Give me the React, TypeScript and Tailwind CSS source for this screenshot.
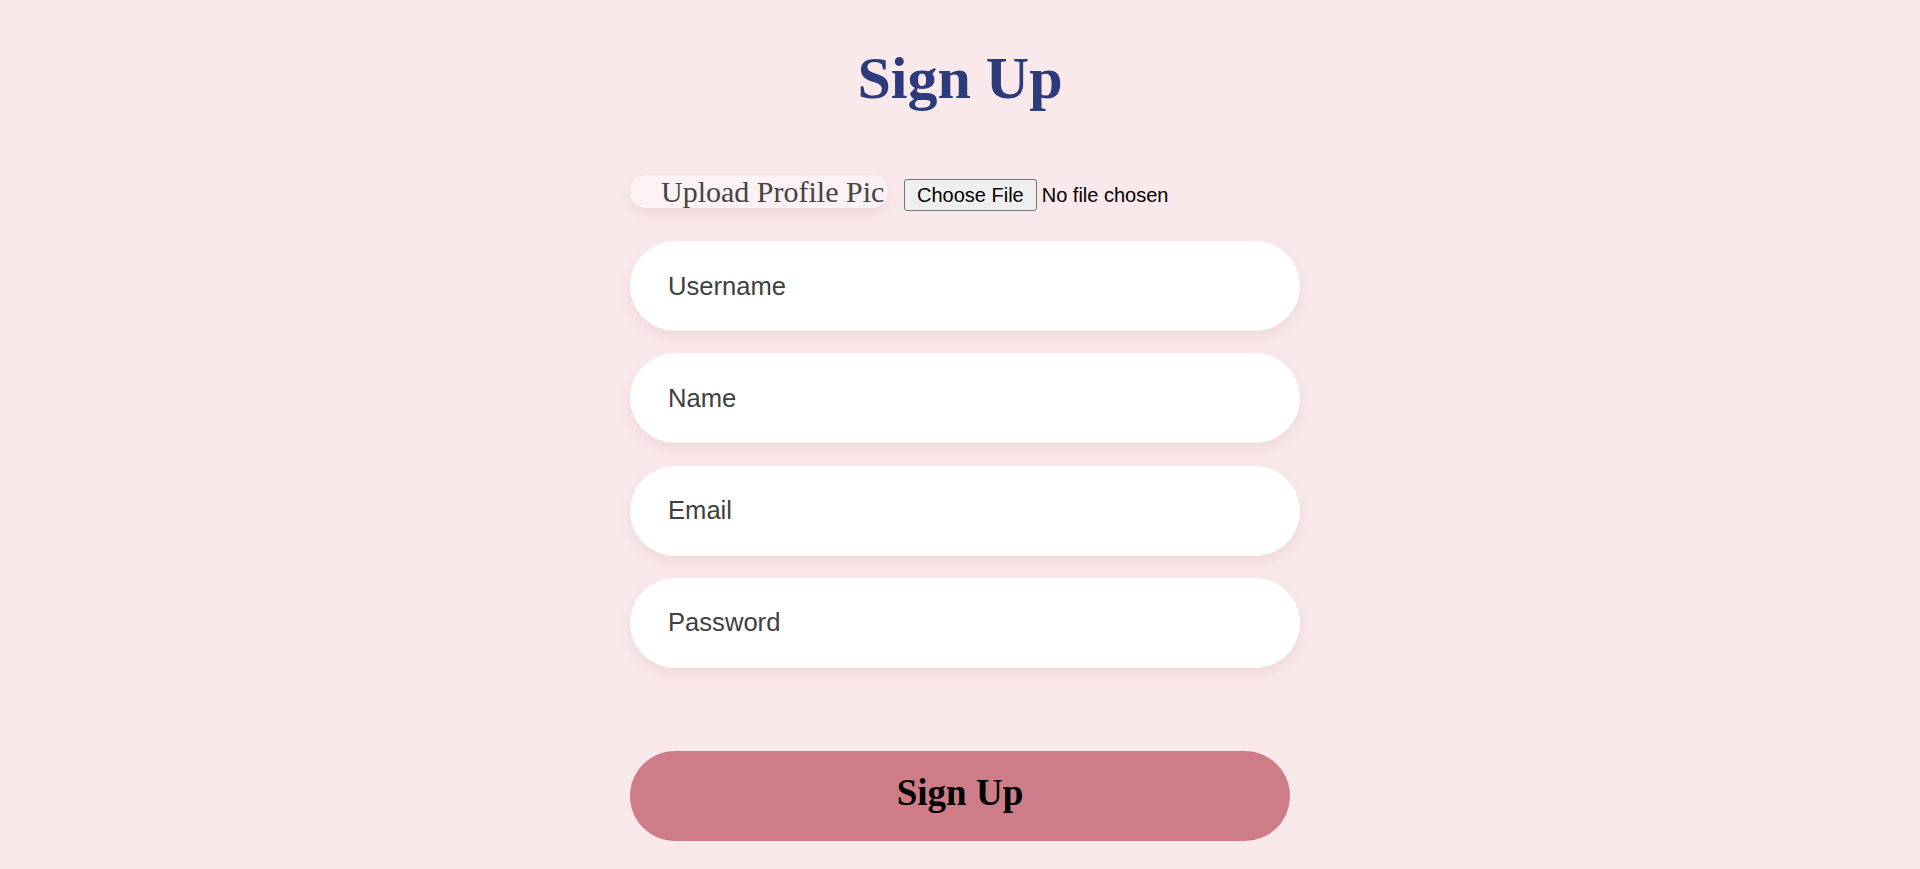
import React from "react";

export default function App() {
  const fields = ["Username", "Name", "Email", "Password"];
  return (
    <div className="min-h-screen bg-[#fae9eb] pt-[48px] pb-[28px]">
      <h1 className="text-center text-[60px] leading-none font-bold text-[#2d3b7d] font-['Liberation_Serif',serif]">
        Sign Up
      </h1>
      <form
        className="w-[660px] mx-auto mt-[67px] flex flex-col"
        onSubmit={(e) => e.preventDefault()}
      >
        <div className="flex items-baseline h-[33px]">
          <label className="w-[258px] h-[33px] leading-[33px] pl-[31px] whitespace-nowrap rounded-[17px] bg-[#fcf2f3] shadow-[0_6px_12px_rgba(160,90,100,0.12)] text-[30px] text-[#444444] font-['Liberation_Serif',serif]">
            Upload Profile Pic
          </label>
          <button
            type="button"
            className="ml-[16px] h-[32px] px-3 border border-[#767676] rounded-[3px] bg-[#efefef] text-[20px] leading-[22px] text-black font-['Liberation_Sans',sans-serif]"
          >
            Choose File
          </button>
          <span className="ml-[5px] text-[20px] leading-[22px] text-black font-['Liberation_Sans',sans-serif]">
            No file chosen
          </span>
        </div>
        <div className="mt-[33px] flex flex-col gap-[22.3px]">
          {fields.map((f) => (
            <input
              key={f}
              type={f === "Password" ? "password" : f === "Email" ? "email" : "text"}
              placeholder={f}
              className="w-[670px] h-[90px] rounded-full bg-white pl-[38px] text-[25.6px] text-[#333] placeholder:text-[#404040] outline-none shadow-[0_6px_14px_rgba(160,90,100,0.12)] font-['Liberation_Sans',sans-serif]"
            />
          ))}
        </div>
        <button
          type="submit"
          className="mt-[83px] w-[660px] h-[90px] pb-[7px] rounded-full bg-[#ce7c88] text-[37px] font-bold text-black font-['Liberation_Serif',serif]"
        >
          Sign Up
        </button>
      </form>
    </div>
  );
}
